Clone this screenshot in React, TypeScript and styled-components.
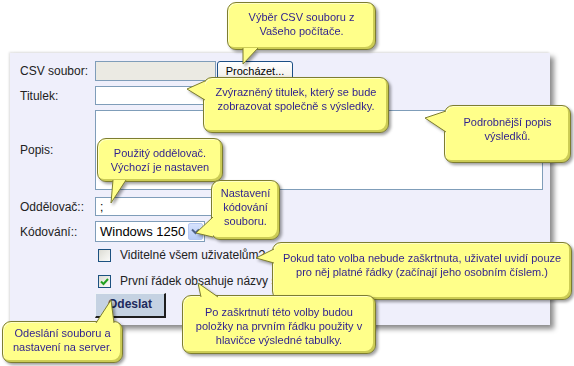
import React from "react";
import styled, { createGlobalStyle } from "styled-components";

const Global = createGlobalStyle`
  html, body { margin: 0; padding: 0; background: #fff; }
  body { font-family: "Liberation Sans", Arial, sans-serif; }
`;

const Stage = styled.div`
  position: relative;
  width: 574px;
  height: 366px;
  overflow: hidden;
  background: #fff;
  padding: 53px 0 0 10px;
  box-sizing: border-box;
`;

const Panel = styled.div`
  width: 540px;
  height: 272px;
  box-sizing: border-box;
  background: #efeffb;
  padding: 8px 0 0 10px;
  box-shadow: -1px -1px 2px rgba(0, 0, 0, 0.12), 4px 4px 5px rgba(0, 0, 0, 0.45);
  display: flex;
  flex-direction: column;
`;

const FormRow = styled.div<{ $top: number; $h: number }>`
  display: flex;
  align-items: center;
  margin-top: ${(p) => p.$top}px;
  height: ${(p) => p.$h}px;
`;

const FieldLabel = styled.label`
  width: 75px;
  flex-shrink: 0;
  font-size: 12px;
  color: #222;
  align-self: center;
`;

const TextField = styled.input<{ $w: number; $h: number; $bg?: string }>`
  width: ${(p) => p.$w}px;
  height: ${(p) => p.$h}px;
  box-sizing: border-box;
  border: 1px solid #7f9db9;
  background: ${(p) => p.$bg || "#fff"};
  font: 12px "Liberation Sans", Arial, sans-serif;
  color: #000;
  padding: 0 4px;
  margin: 0;
  outline: none;
`;

const BrowseButton = styled.button`
  width: 76px;
  height: 20px;
  margin-left: 1px;
  box-sizing: border-box;
  border: 1px solid #1c4f85;
  border-radius: 3px;
  background: linear-gradient(#ffffff, #f4f3ee 70%, #dcd8cc);
  font: 11px "Liberation Sans", Arial, sans-serif;
  color: #000;
  padding: 0;
`;

const TextArea = styled.textarea`
  width: 448px;
  height: 80px;
  box-sizing: border-box;
  border: 1px solid #7f9db9;
  background: #fff;
  resize: none;
  margin: 0;
  padding: 2px;
  outline: none;
`;

const SelectBox = styled.div`
  width: 110px;
  height: 21px;
  box-sizing: border-box;
  border: 1px solid #7f9db9;
  background: #fff;
  display: flex;
  align-items: center;
  justify-content: space-between;
  padding: 1px 1px 1px 4px;
  font-size: 13px;
  color: #000;
`;

const SelectArrow = styled.span`
  width: 15px;
  height: 17px;
  box-sizing: border-box;
  border: 1px solid #b5c8f2;
  border-radius: 2px;
  background: linear-gradient(#d6e2fd, #b7ccf8);
  display: flex;
  align-items: center;
  justify-content: center;
`;

const CheckLine = styled.label`
  display: flex;
  align-items: center;
  margin-left: 78px;
  font-size: 12px;
  color: #222;
  white-space: nowrap;
`;

const CheckBox = styled.span`
  width: 13px;
  height: 13px;
  box-sizing: border-box;
  border: 1px solid #1c5180;
  background: linear-gradient(135deg, #dcdcd4, #fbfbf9);
  display: flex;
  align-items: center;
  justify-content: center;
  margin-right: 9px;
`;

const SubmitButton = styled.button`
  width: 71px;
  height: 25px;
  margin-left: 75px;
  box-sizing: border-box;
  background: #c5d2e2;
  border-top: 1px solid #eef2f8;
  border-left: 1px solid #eef2f8;
  border-right: 2px solid #1e1e1e;
  border-bottom: 2px solid #1e1e1e;
  font: bold 12px "Liberation Sans", Arial, sans-serif;
  color: #1d2a5c;
  padding: 0 0 2px 0;
`;

const CalloutBox = styled.div<{ $pt: number }>`
  position: absolute;
  box-sizing: border-box;
  background: #ffff8a;
  border: 1px solid #7d7d30;
  border-radius: 9px;
  box-shadow: inset -2px -2px 0 #cccc55, inset 1px 1px 0 #ffffc4;
  filter: drop-shadow(2px 2px 1.5px rgba(0, 0, 0, 0.38));
  padding-top: ${(p) => p.$pt}px;
  text-align: center;
  font: 11px/14px "Liberation Sans", Arial, sans-serif;
  color: #2e1f8f;
  white-space: nowrap;
`;

const CalloutTail = styled.svg`
  position: absolute;
  left: -1px;
  top: -1px;
  width: 1px;
  height: 1px;
  overflow: visible;
  pointer-events: none;
`;

type Pt = [number, number];
type CalloutData = {
  x: number;
  y: number;
  w: number;
  h: number;
  pt: number;
  tail: [Pt, Pt, Pt];
  lines: string[];
};

const callouts: CalloutData[] = [
  { x: 227, y: 2, w: 149, h: 48, pt: 7, tail: [[243, 48], [243, 64], [258, 48]], lines: ["Výběr CSV souboru z", "Vašeho počítače."] },
  { x: 203, y: 77, w: 186, h: 56, pt: 7, tail: [[205, 81], [187, 89], [205, 100]], lines: ["Zvýrazněný titulek, který se bude", "zobrazovat společně s výsledky."] },
  { x: 444, y: 105, w: 127, h: 58, pt: 9, tail: [[446, 111], [425, 118], [446, 132]], lines: ["Podrobnější popis", "výsledků."] },
  { x: 97, y: 138, w: 126, h: 44, pt: 7, tail: [[113, 180], [111, 203], [126, 180]], lines: ["Použitý oddělovač.", "Výchozí je nastaven"] },
  { x: 211, y: 180, w: 69, h: 60, pt: 5, tail: [[213, 217], [196, 233], [213, 237]], lines: ["Nastavení", "kódování", "souboru."] },
  { x: 272, y: 242, w: 300, h: 58, pt: 8, tail: [[274, 249], [256, 258], [274, 263]], lines: ["Pokud tato volba nebude zaškrtnuta, uživatel uvidí pouze", "pro něj platné řádky (začínají jeho osobním číslem.)"] },
  { x: 182, y: 295, w: 194, h: 59, pt: 9, tail: [[201, 297], [198, 283], [218, 297]], lines: ["Po zaškrtnutí této volby budou", "položky na prvním řádku použity v", "hlavičce výsledné tabulky."] },
  { x: 2, y: 321, w: 121, h: 42, pt: 4, tail: [[96, 323], [111, 300], [114, 323]], lines: ["Odeslání souboru a", "nastavení na server."] },
];

function Callout({ d }: { d: CalloutData }) {
  const rel = d.tail.map(([px, py]) => [px - d.x, py - d.y] as Pt);
  const poly = rel.map((p) => p.join(",")).join(" ");
  return (
    <CalloutBox $pt={d.pt} style={{ left: d.x, top: d.y, width: d.w, height: d.h }}>
      {d.lines.map((l, i) => (
        <div key={i}>{l}</div>
      ))}
      <CalloutTail>
        <polygon points={poly} fill="#ffff8a" />
        <polyline points={poly} fill="none" stroke="#7d7d30" strokeWidth="1" />
      </CalloutTail>
    </CalloutBox>
  );
}

export default function App() {
  return (
    <>
      <Global />
      <Stage>
        <Panel>
          <FormRow $top={0} $h={20}>
            <FieldLabel>CSV soubor:</FieldLabel>
            <TextField $w={121} $h={20} $bg="#ebeae3" readOnly />
            <BrowseButton>Procházet...</BrowseButton>
          </FormRow>
          <FormRow $top={5} $h={19}>
            <FieldLabel>Titulek:</FieldLabel>
            <TextField $w={205} $h={19} readOnly />
          </FormRow>
          <FormRow $top={5} $h={80}>
            <FieldLabel>Popis:</FieldLabel>
            <TextArea readOnly />
          </FormRow>
          <FormRow $top={7} $h={19}>
            <FieldLabel>Oddělovač::</FieldLabel>
            <TextField $w={150} $h={19} defaultValue=";" readOnly />
          </FormRow>
          <FormRow $top={5} $h={21}>
            <FieldLabel>Kódování::</FieldLabel>
            <SelectBox>
              <span>Windows 1250</span>
              <SelectArrow>
                <svg width="9" height="7" viewBox="0 0 9 7">
                  <path d="M1 1.5 L4.5 5 L8 1.5" fill="none" stroke="#4d6185" strokeWidth="2" />
                </svg>
              </SelectArrow>
            </SelectBox>
          </FormRow>
          <FormRow $top={6} $h={14}>
            <CheckLine>
              <CheckBox />
              Viditelné všem uživatelům?
            </CheckLine>
          </FormRow>
          <FormRow $top={12} $h={14}>
            <CheckLine>
              <CheckBox>
                <svg width="9" height="9" viewBox="0 0 9 9">
                  <path d="M1 4.5 L3.5 7 L8 2" fill="none" stroke="#21a121" strokeWidth="2" />
                </svg>
              </CheckBox>
              První řádek obsahuje názvy sloupců
            </CheckLine>
          </FormRow>
          <FormRow $top={5} $h={25}>
            <SubmitButton>Odeslat</SubmitButton>
          </FormRow>
        </Panel>
        {callouts.map((c, i) => (
          <Callout key={i} d={c} />
        ))}
      </Stage>
    </>
  );
}
